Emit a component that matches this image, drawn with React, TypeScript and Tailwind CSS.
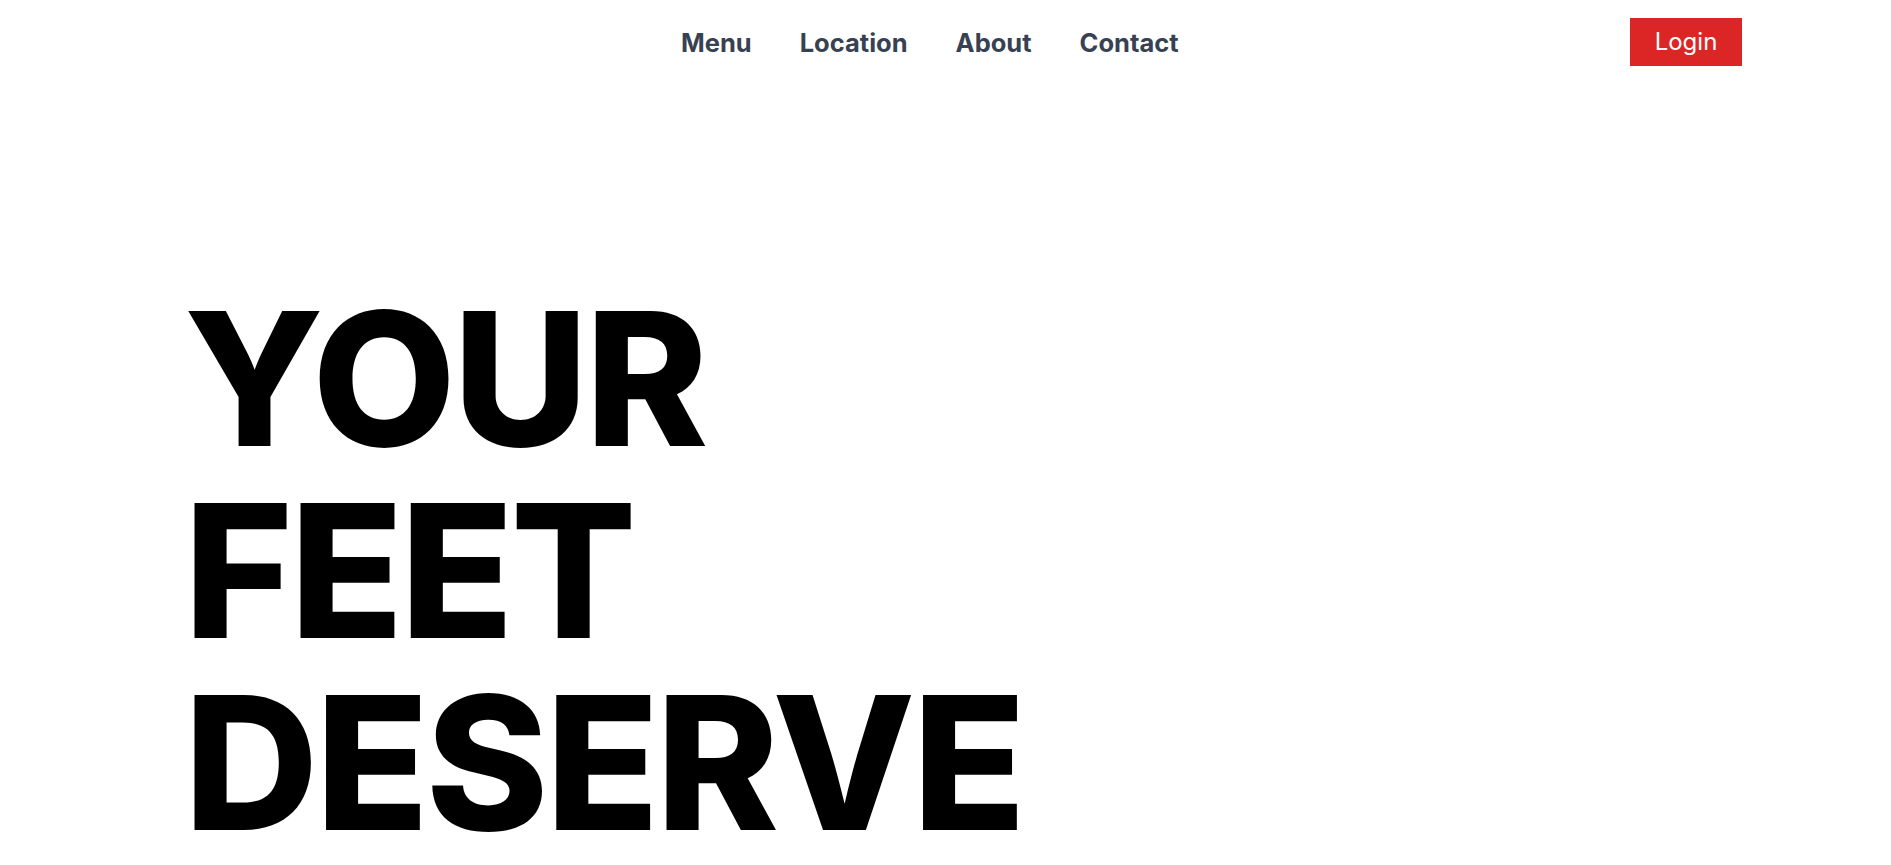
import React from 'react';

const App: React.FC = () => {
  const links = ['Menu', 'Location', 'About', 'Contact'];

  return (
    <div className="min-h-screen bg-white font-['Inter','Liberation_Sans',sans-serif]">
      {/* Header */}
      <header className="flex items-center h-[84px] pl-[681px] pr-[149px]">
        <nav className="flex items-center gap-[48px] pt-[2px]">
          {links.map((link) => (
            <a key={link} href="#" className="text-[25.5px] font-bold text-[#374151] leading-none">
              {link}
            </a>
          ))}
        </nav>
        <button className="ml-auto w-[112px] h-[48px] bg-[#dc2626] text-white text-[24px] leading-none">
          Login
        </button>
      </header>

      {/* Hero */}
      <section className="pl-[184px] pt-[199px]">
        <h1 className="text-[186px] leading-[192px] font-extrabold tracking-[-3px] text-black">
          YOUR
          <br />
          FEET
          <br />
          DESERVE
        </h1>
      </section>
    </div>
  );
};

export default App;
